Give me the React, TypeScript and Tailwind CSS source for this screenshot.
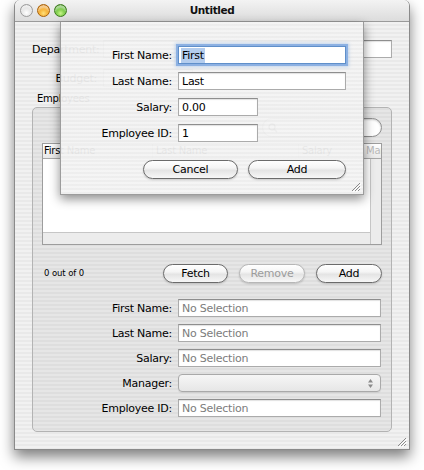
import React from "react";

const field =
  "h-[18px] bg-white border border-[#ababab] border-t-[#8e8e8e] shadow-[inset_0_1px_1px_rgba(0,0,0,0.12)] flex items-center pl-[3px] overflow-hidden whitespace-nowrap";

function AquaButton({ label, w, disabled }: { label: string; w: string; disabled?: boolean }) {
  return (
    <div
      className={`${w} h-[19px] rounded-full border ${
        disabled ? "border-[#b6b6b6] text-[#9c9c9c]" : "border-[#6b6b6b] text-black"
      } bg-[linear-gradient(180deg,#ffffff_0%,#f5f5f5_40%,#e4e4e4_55%,#f7f7f7_100%)] shadow-[0_1px_2px_rgba(0,0,0,0.18)] flex items-center justify-center`}
    >
      {label}
    </div>
  );
}

function Grip() {
  return (
    <svg width="10" height="10" viewBox="0 0 10 10">
      <line x1="1" y1="9" x2="9" y2="1" stroke="#8a8a8a" strokeWidth="1" />
      <line x1="4" y1="9" x2="9" y2="4" stroke="#8a8a8a" strokeWidth="1" />
      <line x1="7" y1="9" x2="9" y2="7" stroke="#8a8a8a" strokeWidth="1" />
      <line x1="2" y1="10" x2="10" y2="2" stroke="#ffffff" strokeWidth="1" />
      <line x1="5" y1="10" x2="10" y2="5" stroke="#ffffff" strokeWidth="1" />
    </svg>
  );
}

export default function App() {
  return (
    <div className="w-[424px] h-[470px] bg-white overflow-hidden font-['DejaVu_Sans',sans-serif] text-[11px] tracking-[-0.25px] text-black leading-none">
      <div className="relative ml-[14px] w-[396px] h-[450px] rounded-t-[6px] border-x border-b border-[#8a8a8a] shadow-[0_7px_14px_rgba(0,0,0,0.5)] flex flex-col">
        {/* Title bar */}
        <div className="h-[22px] shrink-0 rounded-t-[6px] grid grid-cols-[1fr_auto_1fr] items-center border-b border-[#9a9a9a] bg-[linear-gradient(180deg,#f3f3f3,#dcdcdc)]">
          <div className="flex items-center gap-[4px] pl-[5px]">
            <div className="w-[13px] h-[13px] rounded-full border border-[#9c9c9c] bg-[radial-gradient(circle_at_50%_70%,#ffffff,#e2e2e2_55%,#b9b9b9)] shadow-[inset_0_2px_2px_rgba(255,255,255,0.7)]" />
            <div className="w-[13px] h-[13px] rounded-full border border-[#a8620c] bg-[radial-gradient(circle_at_50%_75%,#ffe07a,#f3a21c_55%,#c56a06)] shadow-[inset_0_3px_2px_rgba(255,255,255,0.55)]" />
            <div className="w-[13px] h-[13px] rounded-full border border-[#3d7a1e] bg-[radial-gradient(circle_at_50%_75%,#c8f58a,#62bd30_55%,#2f7d12)] shadow-[inset_0_3px_2px_rgba(255,255,255,0.55)]" />
          </div>
          <div className="font-bold text-[10.5px] tracking-[-0.4px] text-[#111]">Untitled</div>
          <div />
        </div>

        {/* Body */}
        <div className="flex-1 flex flex-col px-[17px] pt-[18px] bg-[repeating-linear-gradient(180deg,#f1f1f1_0px,#f1f1f1_2px,#e9e9e9_2px,#e9e9e9_4px)]">
          <div className="grid grid-cols-[65px_1fr] gap-x-[6px] gap-y-[11px] items-center">
            <div className="text-right whitespace-nowrap">Department:</div>
            <div className={`${field} w-full`} />
            <div className="text-right whitespace-nowrap">Budget:</div>
            <div className={`${field} w-[90px]`} />
          </div>
          <div className="mt-[6px] ml-[5px] h-[12px] text-[10px] flex items-center">Employees</div>
          <div className="mt-[2px] h-[325px] rounded-[5px] border border-[#b3b3b3] bg-black/[0.045] px-[9px] pt-[10px] flex flex-col">
            {/* search */}
            <div className="self-end w-[120px] h-[19px] rounded-full border border-[#8f8f8f] bg-white shadow-[inset_0_1px_2px_rgba(0,0,0,0.2)] flex items-center pl-[5px]">
              <svg width="10" height="10" viewBox="0 0 10 10">
                <circle cx="4" cy="4" r="3" fill="none" stroke="#666" strokeWidth="1.3" />
                <line x1="6.2" y1="6.2" x2="9" y2="9" stroke="#666" strokeWidth="1.5" />
              </svg>
            </div>
            {/* table */}
            <div className="mt-[6px] h-[102px] shrink-0 border border-[#9d9d9d] bg-white flex flex-col">
              <div className="h-[15px] shrink-0 flex border-b border-[#a8a8a8] bg-[linear-gradient(180deg,#ffffff,#e9e9e9)] text-[10px] whitespace-nowrap">
                <div className="w-[110px] border-r border-[#cdcdcd] pl-[1px] flex items-center">First Name</div>
                <div className="w-[146px] border-r border-[#cdcdcd] pl-[3px] flex items-center">Last Name</div>
                <div className="w-[65px] border-r border-[#cdcdcd] pl-[3px] flex items-center">Salary</div>
                <div className="flex-1 overflow-hidden pl-[2px] flex items-center text-[#b9b9b9]">Man</div>
              </div>
              <div className="flex-1 flex">
                <div className="flex-1 flex flex-col">
                  <div className="flex-1 bg-white" />
                  <div className="h-[12px] bg-[#ececec] border-t border-[#c6c6c6]" />
                </div>
                <div className="w-[11px] bg-[#ececec] border-l border-[#c6c6c6]" />
              </div>
            </div>
            {/* button row */}
            <div className="mt-[19px] h-[19px] shrink-0 flex items-center">
              <div className="flex-1 pl-[2px] text-[8.5px] tracking-[-0.1px]">0 out of 0</div>
              <div className="flex gap-[11px]">
                <AquaButton label="Fetch" w="w-[65px]" />
                <AquaButton label="Remove" w="w-[66px]" disabled />
                <AquaButton label="Add" w="w-[66px]" />
              </div>
            </div>
            {/* fields */}
            <div className="mt-[16px] pr-[1px] grid grid-cols-[130px_1fr] gap-x-[6px] gap-y-[7px] items-center">
              <div className="text-right whitespace-nowrap">First Name:</div>
              <div className={`${field} text-[#7c7c7c]`}>No Selection</div>
              <div className="text-right whitespace-nowrap">Last Name:</div>
              <div className={`${field} text-[#7c7c7c]`}>No Selection</div>
              <div className="text-right whitespace-nowrap">Salary:</div>
              <div className={`${field} text-[#7c7c7c]`}>No Selection</div>
              <div className="text-right whitespace-nowrap">Manager:</div>
              <div className="h-[18px] rounded-[4px] border border-[#a9a9a9] bg-[linear-gradient(180deg,#f6f6f6,#e6e6e6)] shadow-[0_1px_1px_rgba(0,0,0,0.08)] flex items-center justify-end pr-[6px]">
                <svg width="7" height="11" viewBox="0 0 7 11">
                  <path d="M3.5 1 L6 4.5 L1 4.5 Z" fill="#8a8a8a" />
                  <path d="M3.5 10 L6 6.5 L1 6.5 Z" fill="#8a8a8a" />
                </svg>
              </div>
              <div className="text-right whitespace-nowrap">Employee ID:</div>
              <div className={`${field} text-[#7c7c7c]`}>No Selection</div>
            </div>
          </div>
        </div>

        {/* Window resize grip */}
        <div className="absolute right-[2px] bottom-[2px]">
          <Grip />
        </div>

        {/* Sheet */}
        <div className="absolute left-[45px] top-[22px] w-[304px] h-[173px] border-x border-b border-[#9c9c9c] bg-[repeating-linear-gradient(180deg,rgba(244,244,244,0.95)_0px,rgba(244,244,244,0.95)_2px,rgba(237,237,237,0.95)_2px,rgba(237,237,237,0.95)_4px)] shadow-[0_4px_10px_rgba(0,0,0,0.45)] pt-[24px]">
          <div className="grid grid-cols-[111px_auto] gap-x-[6px] gap-y-[8px] items-center justify-items-start">
            <div className="justify-self-end whitespace-nowrap">First Name:</div>
            <div className="w-[168px] h-[18px] bg-white border border-[#5f8fca] shadow-[0_0_0_2px_rgba(130,170,225,0.85),0_0_3px_3px_rgba(130,170,225,0.45)] flex items-center pl-[2px]">
              <span className="bg-[#b4cdee] px-[1px] py-[2px]">First</span>
            </div>
            <div className="justify-self-end whitespace-nowrap">Last Name:</div>
            <div className={`${field} w-[168px]`}>Last</div>
            <div className="justify-self-end whitespace-nowrap">Salary:</div>
            <div className={`${field} w-[80px]`}>0.00</div>
            <div className="justify-self-end whitespace-nowrap">Employee ID:</div>
            <div className={`${field} w-[80px]`}>1</div>
          </div>
          <div className="mt-[18px] flex justify-end pr-[17px] gap-[10px]">
            <AquaButton label="Cancel" w="w-[95px]" />
            <AquaButton label="Add" w="w-[98px]" />
          </div>
          <div className="absolute right-[2px] bottom-[2px]">
            <Grip />
          </div>
        </div>
      </div>
    </div>
  );
}
